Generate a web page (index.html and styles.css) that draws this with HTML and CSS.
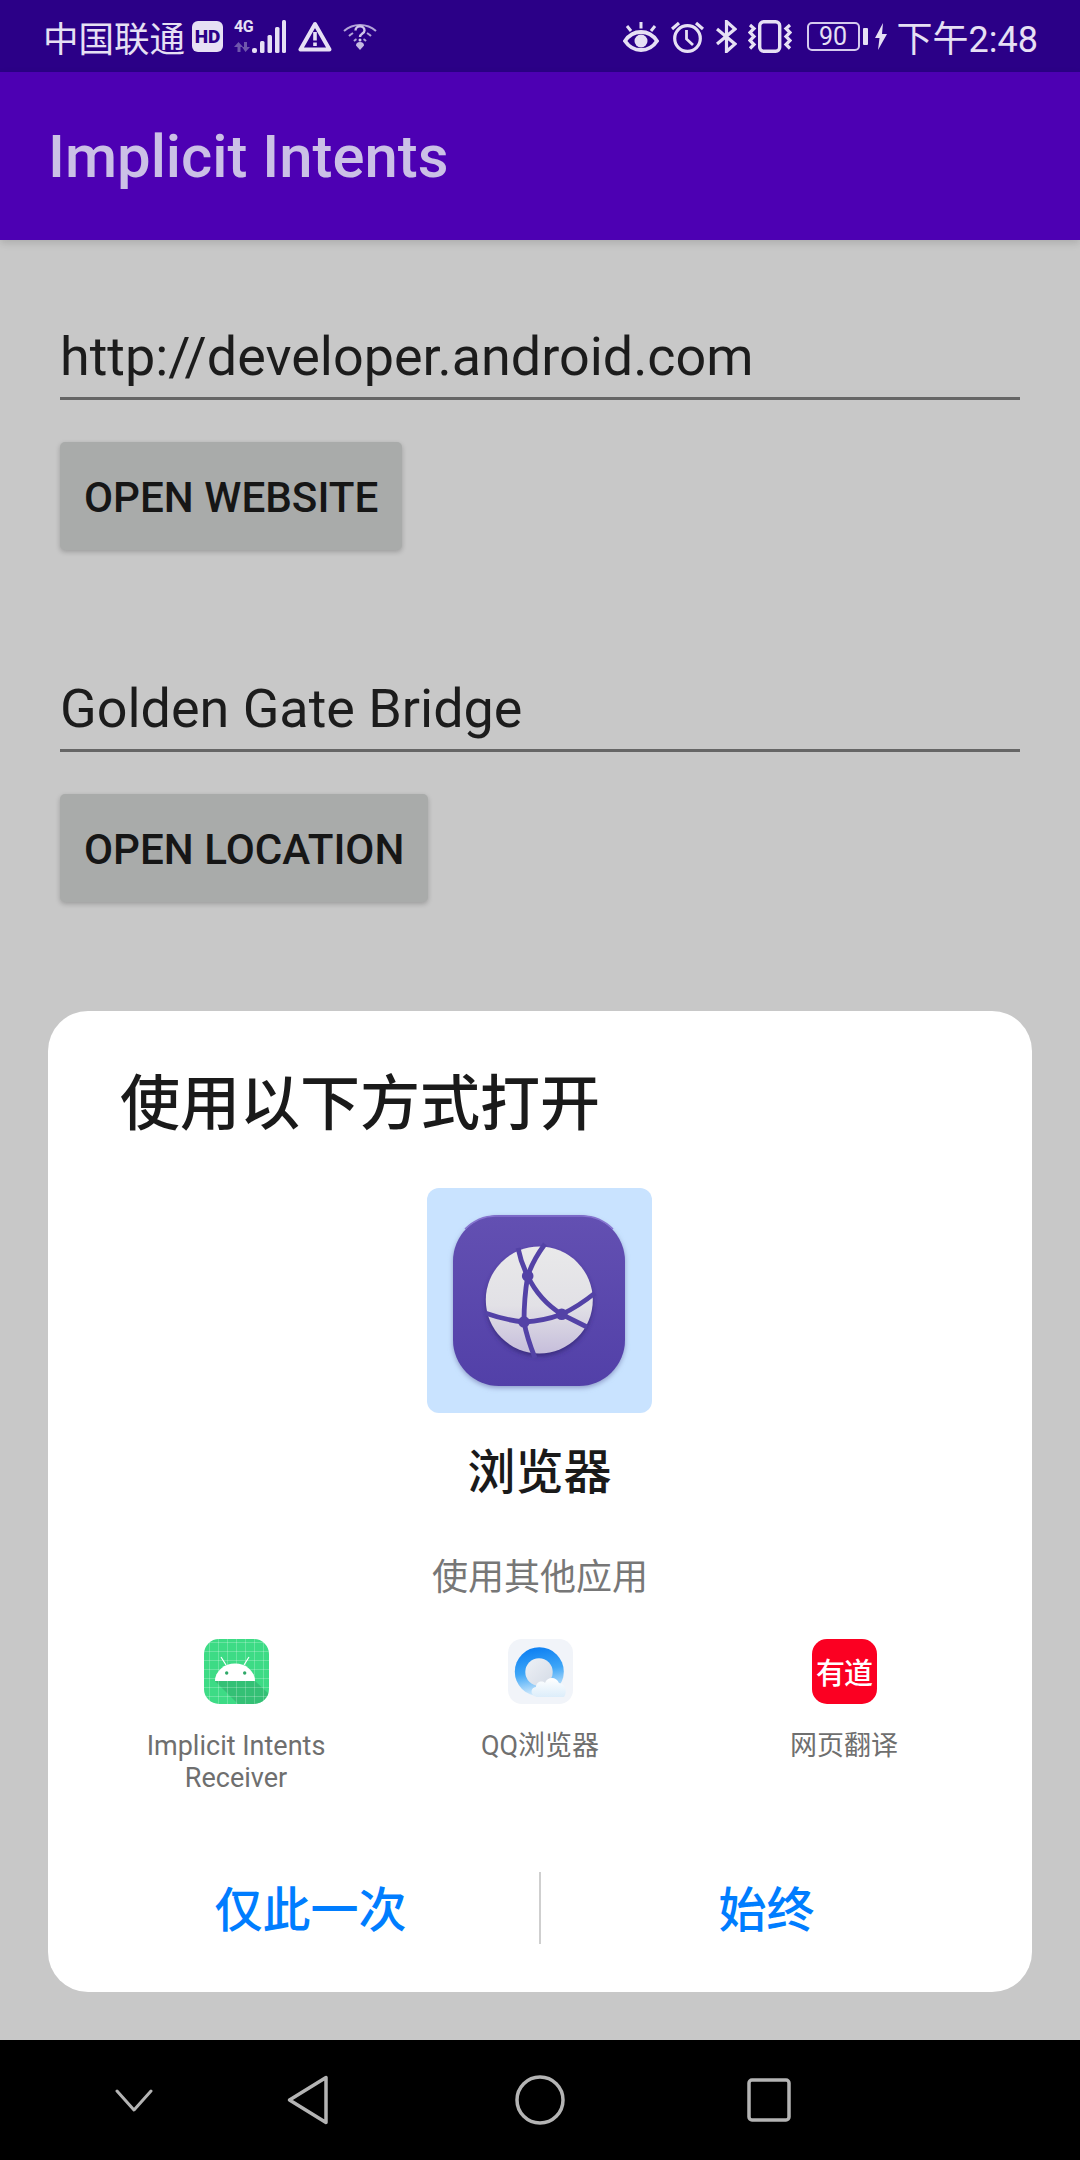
FILE: index.html
```html
<!DOCTYPE html>
<html lang="zh">
<head>
<meta charset="utf-8">
<title>Implicit Intents</title>
<link rel="stylesheet" href="styles.css">
</head>
<body>
<div class="screen">
  <header class="status">
    <div class="status-group left">
      <span class="carrier">中国联通</span>
      <svg class="i-hd" viewBox="0 0 31 31"><rect width="31" height="31" rx="6" fill="#e6e0f4"/></svg>
      <span class="hd-text">HD</span>
      <span class="net">
        <span class="net-4g">4G</span>
        <svg class="i-arrows" viewBox="0 0 18 10"><path d="M4.500 0L9 5H6.500v5h-3V5H0zM10 0h3v5h3l-4.500 5L8 5h2z" fill="#6f56ac"/></svg>
      </span>
      <svg class="i-signal" viewBox="0 0 34 33"><rect x="0" y="28" width="5" height="5" rx="2" fill="#e6e0f4"/><rect x="8" y="21" width="4.500" height="12" rx="1.500" fill="#e6e0f4"/><rect x="15.500" y="15" width="4.500" height="18" rx="1.500" fill="#e6e0f4"/><rect x="23" y="7" width="4.500" height="26" rx="1.500" fill="#e6e0f4"/><rect x="30" y="0" width="4" height="33" rx="1.500" fill="#e6e0f4"/></svg>
      <svg class="i-warn" viewBox="0 0 34 31"><path d="M17 3L2.500 28.500h29z" fill="none" stroke="#e6e0f4" stroke-width="4" stroke-linejoin="round"/><path d="M15.200 11h3.600v8.500h-3.600zM15.200 21.500h3.600v3.500h-3.600z" fill="#e6e0f4"/></svg>
      <svg class="i-wifi" viewBox="0 0 34 28"><g fill="none" stroke="#b3a5d8" stroke-width="2"><path d="M1 9C10 1 24 1 33 9"/><path d="M6 14c1-1 2.500-2 4-3M28 14c-1-1-2.500-2-4-3"/><path d="M11 19c.7-.7 1.500-1.300 2.500-1.800M23 19c-.7-.7-1.500-1.300-2.500-1.800"/><path d="M12.500 8.500c0-5.500 9-5.500 9 0 0 3-4.500 3-4.500 6.500" stroke-width="2.400" stroke="#d0c6ea"/></g><circle cx="17" cy="18" r="1.500" fill="#d0c6ea"/><path d="M13 23.500a4 3.500 0 0 1 8 0L17 28z" fill="#c5b9e3"/></svg>
    </div>
    <div class="status-group right">
      <svg class="i-eye" viewBox="0 0 36 31"><path d="M2 20C10 8 26 8 34 20 26 32 10 32 2 20z" fill="none" stroke="#e6e0f4" stroke-width="3.800"/><circle cx="18" cy="20" r="6.500" fill="#e6e0f4"/><path d="M18 1v6.500M4 5l4 5M32 5l-4 5" stroke="#e6e0f4" stroke-width="3" fill="none"/></svg>
      <svg class="i-alarm" viewBox="0 0 33 33"><circle cx="16.500" cy="18.500" r="12.800" fill="none" stroke="#e6e0f4" stroke-width="3.200"/><path d="M15.500 10v9l6.500 6" fill="none" stroke="#e6e0f4" stroke-width="2.800"/><path d="M1 9l7-6M32 9l-7-6" fill="none" stroke="#e6e0f4" stroke-width="3.200"/></svg>
      <svg class="i-bt" viewBox="0 0 21 33"><path d="M1 9l18 15-8.500 7.500V1.500L19 9 1 24" fill="none" stroke="#e6e0f4" stroke-width="3.200"/></svg>
      <svg class="i-vib" viewBox="0 0 44 33"><rect x="11.700" y="1.800" width="20" height="29.500" rx="4" fill="none" stroke="#e6e0f4" stroke-width="3.400"/><path d="M2 5l4 3.500-4 4 4 4-4 4 4 4-4 4M42 5l-4 3.500 4 4-4 4 4 4-4 4 4 4" fill="none" stroke="#e6e0f4" stroke-width="3.200"/></svg>
      <div class="battery"><span class="batt-box">90</span><span class="batt-nub"></span></div>
      <svg class="i-bolt" viewBox="0 0 12 27"><path d="M8 0L0 15h4.500L3 27l9-16H7z" fill="#e6e0f4"/></svg>
      <span class="time">下午2:48</span>
    </div>
  </header>

  <div class="appbar"><h1 class="app-title">Implicit Intents</h1></div>

  <main class="content">
    <section class="form-block">
      <div class="field">http://developer.android.com</div>
      <div class="btn">OPEN WEBSITE</div>
    </section>
    <section class="form-block">
      <div class="field">Golden Gate Bridge</div>
      <div class="btn">OPEN LOCATION</div>
    </section>

    <div class="dialog">
      <h2 class="dialog-title">使用以下方式打开</h2>
      <div class="main-choice">
        <svg class="browser-icon" viewBox="0 0 225 225">
          <defs>
            <linearGradient id="bg" x1="0" y1="0" x2="0" y2="1"><stop offset="0" stop-color="#6350b2"/><stop offset="1" stop-color="#5240a8"/></linearGradient>
            <linearGradient id="gl" x1="0" y1="0" x2="0" y2="1"><stop offset="0" stop-color="#e9e9ea"/><stop offset=".55" stop-color="#e2e1e6"/><stop offset="1" stop-color="#c6bedb"/></linearGradient>
            <filter id="soft" x="-20%" y="-20%" width="140%" height="140%"><feGaussianBlur stdDeviation="2.500"/></filter>
          </defs>
          <rect width="225" height="225" rx="12" fill="#c9e3ff"/>
          <rect x="26" y="29" width="172" height="171" rx="46" fill="#8f9cc9" filter="url(#soft)"/>
          <rect x="26" y="27" width="172" height="171" rx="46" fill="url(#bg)"/>
          <path d="M38 41A44 44 0 0 1 72 28H152A44 44 0 0 1 186 41" fill="none" stroke="#8573cf" stroke-width="1.500"/>
          <circle cx="112.300" cy="115" r="53" fill="#372a7c" filter="url(#soft)"/>
          <circle cx="112.300" cy="112" r="53.500" fill="url(#gl)"/>
          <g fill="none" stroke="#5342a6" stroke-width="4.800">
            <path d="M100.700 88Q106 72 118 56"/>
            <path d="M100.700 88Q94 75 91 60"/>
            <path d="M100.700 88Q97 110 97 134"/>
            <path d="M97 134Q100 150 108 170"/>
            <path d="M100.700 88Q112 112 134.700 126.300"/>
            <path d="M134.700 126.300L160 139"/>
            <path d="M97 134Q78 132 58 125"/>
            <path d="M97 134Q117 133 134.700 126.300"/>
            <path d="M134.700 126.300Q152 118 168 105"/>
          </g>
          <circle cx="100.700" cy="88" r="5.800" fill="#5342a6"/>
          <circle cx="97" cy="134" r="5.800" fill="#5342a6"/>
          <circle cx="134.700" cy="126.300" r="5.800" fill="#5342a6"/>
        </svg>
        <div class="main-label">浏览器</div>
      </div>
      <div class="other-label">使用其他应用</div>
      <div class="apps">
        <div class="app">
          <svg class="app-icon" viewBox="0 0 65 65">
            <defs>
              <pattern id="grid" width="9" height="9" patternUnits="userSpaceOnUse" x="5" y="3"><path d="M0 0v9M0 0h9" stroke="#fff" stroke-opacity=".45" stroke-width="1" fill="none"/></pattern>
              <clipPath id="rr"><rect width="65" height="65" rx="15"/></clipPath>
            </defs>
            <g clip-path="url(#rr)">
              <rect width="65" height="65" fill="#3ddb85"/>
              <path d="M11 42h40l14 13v10H34z" fill="#2fae6a" fill-opacity=".6"/>
              <rect width="65" height="65" fill="url(#grid)"/>
              <path d="M17 18l5 8M45 18l-5 8" stroke="#fff" stroke-width="1.200"/>
              <path d="M11 42a20 17.500 0 0 1 40 0z" fill="#fff"/>
              <circle cx="22.700" cy="34" r="1.700" fill="#2fa868"/><circle cx="40.700" cy="34" r="1.700" fill="#2fa868"/>
            </g>
          </svg>
          <div class="app-name">Implicit Intents Receiver</div>
        </div>
        <div class="app">
          <svg class="app-icon" viewBox="0 0 65 65">
            <defs>
              <linearGradient id="qq" x1=".3" y1="0" x2=".5" y2="1"><stop offset="0" stop-color="#0a7df2"/><stop offset=".5" stop-color="#3ea6f7"/><stop offset="1" stop-color="#e3f2fc"/></linearGradient>
              <linearGradient id="qi" x1="0" y1="0" x2="1" y2="1"><stop offset="0" stop-color="#eef1f6"/><stop offset="1" stop-color="#d4dbe6"/></linearGradient>
              <linearGradient id="qc" x1="0" y1="0" x2="0" y2="1"><stop offset="0" stop-color="#ffffff"/><stop offset="1" stop-color="#dcedfa"/></linearGradient>
            </defs>
            <rect width="65" height="65" rx="14" fill="#f1f4f9"/>
            <circle cx="31.300" cy="32.700" r="24.500" fill="url(#qq)"/>
            <circle cx="31" cy="33" r="13.700" fill="url(#qi)"/>
            <path d="M30 58c-7 0-9-9-2-10 0-5 6-7 9-4 2-6 11-7 14 0 6 0 9 9 5 14z" fill="url(#qc)"/>
          </svg>
          <div class="app-name">QQ浏览器</div>
        </div>
        <div class="app">
          <div class="youdao"><span>有道</span></div>
          <div class="app-name">网页翻译</div>
        </div>
      </div>
      <div class="actions">
        <div class="action">仅此一次</div>
        <div class="action-sep"></div>
        <div class="action action-always">始终</div>
      </div>
    </div>
  </main>

  <nav class="navbar">
    <svg class="nav-chev" viewBox="0 0 38 23"><path d="M2 2l17 19L36 2" fill="none" stroke="#b4b4b4" stroke-width="3" stroke-linecap="round" stroke-linejoin="round"/></svg>
    <svg class="nav-back" viewBox="0 0 42 50"><path d="M39 2.500v45L2.500 25z" fill="none" stroke="#b4b4b4" stroke-width="3.500" stroke-linejoin="round"/></svg>
    <svg class="nav-home" viewBox="0 0 50 50"><circle cx="25" cy="25" r="23" fill="none" stroke="#b4b4b4" stroke-width="3.500"/></svg>
    <svg class="nav-recent" viewBox="0 0 44 44"><rect x="2" y="2" width="40" height="40" rx="3" fill="none" stroke="#b4b4b4" stroke-width="3.500"/></svg>
  </nav>
</div>
</body>
</html>
```
FILE: styles.css
```css
* { box-sizing: border-box; margin: 0; padding: 0; }
html, body { width: 1080px; height: 2160px; overflow: hidden; }
body { font-family: Roboto, "Noto Sans CJK SC", sans-serif; background: #c8c8c8; }
.screen { width: 1080px; height: 2160px; display: flex; flex-direction: column; }

.status { height: 72px; flex: none; background: #2b0087; color: #e6e0f4; display: flex; justify-content: space-between; align-items: center; padding: 0 42px 0 43px; }
.status-group { display: flex; align-items: center; position: relative; }
.carrier { font-size: 35.500px; width: 149px; white-space: nowrap; font-family: "Noto Sans CJK SC", sans-serif; font-weight: 400; }
.i-hd { width: 31px; height: 31px; }
.hd-text { position: absolute; left: 149px; width: 31px; text-align: center; top: 50%; transform: translateY(-50%); font-size: 19px; font-weight: 900; color: #2b0087; line-height: 1; }
.net { display: flex; flex-direction: column; width: 19px; margin-left: 11px; align-items: flex-start; height: 32px; justify-content: space-between; }
.net-4g { font-size: 16px; font-weight: 700; line-height: 14px; letter-spacing: -.5px; }
.i-arrows { width: 18px; height: 10px; }
.i-signal { width: 34px; height: 33px; margin-left: -1px; }
.i-warn { width: 34px; height: 31px; margin-left: 12px; }
.i-wifi { width: 34px; height: 28px; margin-left: 11px; }
.i-eye { width: 36px; height: 31px; }
.i-alarm { width: 33px; height: 33px; margin-left: 12px; }
.i-bt { width: 21px; height: 33px; margin-left: 12px; }
.i-vib { width: 44px; height: 33px; margin-left: 11px; }
.battery { display: flex; align-items: center; margin-left: 15px; }
.batt-box { width: 53px; height: 29px; border: 2px solid #d5cbee; border-radius: 5px; font-size: 25px; line-height: 25px; text-align: center; color: #e6e0f4; }
.batt-nub { width: 5px; height: 17px; margin-left: 3px; background: #e6e0f4; border-radius: 1px; }
.i-bolt { width: 12px; height: 27px; margin-left: 7px; }
.time { font-size: 36px; margin-left: 10px; white-space: nowrap; }

.appbar { height: 168px; flex: none; background: #4d00b3; display: flex; align-items: center; padding: 2px 0 0 48px; box-shadow: 0 3px 8px rgba(0,0,0,.14); position: relative; z-index: 1; }
.app-title { font-size: 59.800px; font-weight: 500; color: #cbc0e6; white-space: nowrap; }

.content { flex: 1; padding: 0 60px; position: relative; display: flex; flex-direction: column; background: #c8c8c8; }
.form-block { display: flex; flex-direction: column; align-items: flex-start; }
.form-block:first-child { padding-top: 72px; }
.form-block + .form-block { padding-top: 114px; }
.field { width: 960px; height: 88px; border-bottom: 3px solid #666; font-size: 53.900px; line-height: 72px; color: #1c1c1c; padding-top: 9px; white-space: nowrap; }
.btn { margin-top: 42px; height: 108px; padding: 0 24px; background: #a9abaa; border-radius: 5px; box-shadow: 0 2px 5px rgba(0,0,0,.22); font-size: 42.200px; font-weight: 500; line-height: 111px; color: #161616; white-space: nowrap; }

.dialog { position: absolute; left: 48px; top: 771px; width: 984px; height: 981px; background: #fff; border-radius: 40px; display: flex; flex-direction: column; padding: 48px 0 0; }
.dialog-title { font-size: 60px; font-weight: 500; line-height: 80px; color: #1a1a1a; padding-left: 72px; font-family: "Noto Sans CJK SC", sans-serif; }
.main-choice { display: flex; flex-direction: column; align-items: center; margin-top: 49px; padding-right: 1px; }
.browser-icon { width: 225px; height: 225px; display: block; }
.main-label { font-size: 48px; font-weight: 500; line-height: 64px; margin-top: 23px; color: #1a1a1a; font-family: "Noto Sans CJK SC", sans-serif; }
.other-label { text-align: center; font-size: 36px; line-height: 48px; margin-top: 50px; color: #777; font-family: "Noto Sans CJK SC", sans-serif; }
.apps { display: grid; grid-template-columns: repeat(3, 304px); justify-content: center; margin-top: 41px; height: 188px; }
.app { display: flex; flex-direction: column; align-items: center; text-align: center; }
.app-icon { width: 65px; height: 65px; display: block; }
.youdao { width: 65px; height: 65px; border-radius: 15px; background: #fb0022; display: flex; align-items: center; justify-content: center; color: #fff; font-size: 29px; font-weight: 500; line-height: 1; letter-spacing: -1px; font-family: "Noto Sans CJK SC", sans-serif; }
.app-name { font-size: 27px; line-height: 32px; margin-top: 26px; color: #6f6f6f; width: 210px; }
.actions { display: grid; grid-template-columns: 1fr 2px 1fr; align-items: start; margin-top: 45px; height: 72px; padding: 0 34px; }
.action { text-align: center; font-size: 48px; font-weight: 500; line-height: 68px; color: #007dff; font-family: "Noto Sans CJK SC", sans-serif; }
.action-always { padding-right: 6px; }
.action-sep { height: 72px; background: #cfcfcf; }

.navbar { height: 120px; flex: none; background: #000; display: flex; align-items: center; }
.nav-chev { width: 38px; height: 23px; margin-left: 115px; }
.nav-back { width: 42px; height: 50px; margin-left: 134px; }
.nav-home { width: 50px; height: 50px; margin-left: 186px; }
.nav-recent { width: 44px; height: 44px; margin-left: 182px; }
```
